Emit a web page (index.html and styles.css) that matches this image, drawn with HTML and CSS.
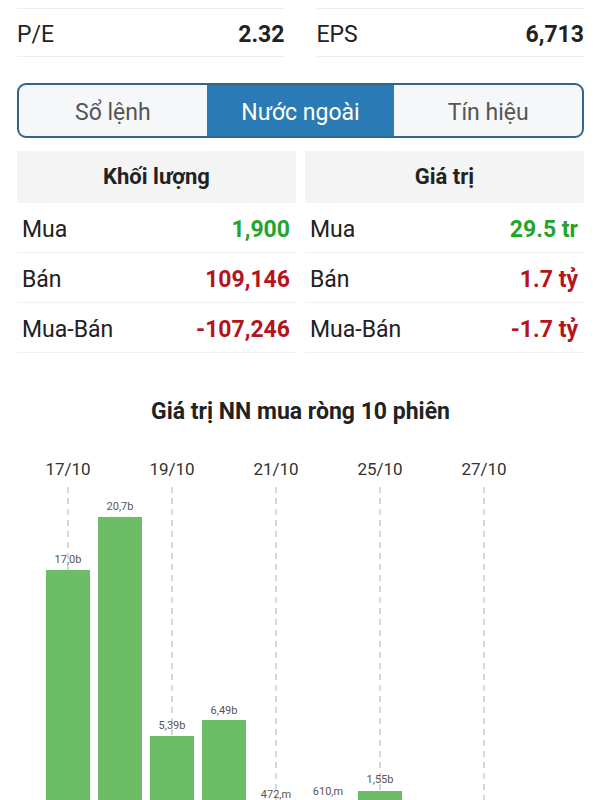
FILE: index.html
```html
<!DOCTYPE html>
<html lang="vi">
<head>
  <meta charset="UTF-8">
  <meta name="viewport" content="width=device-width, initial-scale=1.0">
  <title>Nước ngoài</title>
  <link rel="stylesheet" href="styles.css">
</head>
<body>

  <div class="page">
    <!-- Chỉ số cơ bản -->
    <div class="stats">
      <div class="stat">
        <span class="stat-label">P/E</span>
        <span class="stat-value">2.32</span>
      </div>
      <div class="stat">
        <span class="stat-label">EPS</span>
        <span class="stat-value">6,713</span>
      </div>
    </div>

    <!-- Tabs -->
    <div class="tabs">
      <div class="tab">Sổ lệnh</div>
      <div class="tab active">Nước ngoài</div>
      <div class="tab">Tín hiệu</div>
    </div>

    <!-- Bảng giao dịch nước ngoài -->
    <div class="tables">
      <div class="table">
        <div class="table-head">Khối lượng</div>
        <div class="row"><span>Mua</span><span class="num up">1,900</span></div>
        <div class="row"><span>Bán</span><span class="num down">109,146</span></div>
        <div class="row"><span>Mua-Bán</span><span class="num down">-107,246</span></div>
      </div>
      <div class="table">
        <div class="table-head">Giá trị</div>
        <div class="row"><span>Mua</span><span class="num up">29.5 tr</span></div>
        <div class="row"><span>Bán</span><span class="num down">1.7 tỷ</span></div>
        <div class="row"><span>Mua-Bán</span><span class="num down">-1.7 tỷ</span></div>
      </div>
    </div>

    <h2 class="chart-title">Giá trị NN mua ròng 10 phiên</h2>
  </div>

  <!-- Biểu đồ cột -->
  <div class="chart">
    <svg width="600" height="380" viewBox="0 0 600 380">
      <g class="dates">
        <text x="68" y="35">17/10</text>
        <text x="172" y="35">19/10</text>
        <text x="276" y="35">21/10</text>
        <text x="380" y="35">25/10</text>
        <text x="484" y="35">27/10</text>
      </g>
      <g class="grid">
        <line x1="68" y1="47" x2="68" y2="380"/>
        <line x1="172" y1="47" x2="172" y2="380"/>
        <line x1="276" y1="47" x2="276" y2="380"/>
        <line x1="380" y1="47" x2="380" y2="380"/>
        <line x1="484" y1="47" x2="484" y2="380"/>
      </g>
      <g class="bars">
        <rect x="46" y="130" width="44" height="250"/>
        <rect x="98" y="77" width="44" height="303"/>
        <rect x="150" y="296" width="44" height="84"/>
        <rect x="202" y="280" width="44" height="100"/>
        <rect x="254" y="366" width="44" height="14"/>
        <rect x="306" y="364" width="44" height="16"/>
        <rect x="358" y="351" width="44" height="29"/>
      </g>
      <g class="bar-labels">
        <text x="68" y="123">17,0b</text>
        <text x="120" y="70">20,7b</text>
        <text x="172" y="289">5,39b</text>
        <text x="224" y="274">6,49b</text>
        <text x="276" y="358">472,m</text>
        <text x="328" y="355">610,m</text>
        <text x="380" y="343">1,55b</text>
      </g>
    </svg>
  </div>

</body>
</html>
```

FILE: styles.css
```css
body {
  margin: 0;
  font-family: Roboto, "Noto Sans", sans-serif;
  background-color: #ffffff;
  color: #222222;
}

.page {
  padding: 8px 16px 0 17px;
}

/* Hàng chỉ số P/E, EPS */
.stats {
  display: grid;
  grid-template-columns: 1fr 1fr;
  column-gap: 32px;
}

.stat {
  display: flex;
  justify-content: space-between;
  align-items: center;
  box-sizing: border-box;
  height: 49px;
  padding-top: 3px;
  border-top: 1px solid #eeeeee;
  border-bottom: 1px solid #eeeeee;
  font-size: 23px;
}

.stat-value {
  font-weight: bold;
}

/* Tabs */
.tabs {
  display: flex;
  margin-top: 26px;
  height: 51px;
  border: 2px solid #2f6689;
  border-radius: 9px;
  overflow: hidden;
  background-color: #f6f7f9;
}

.tab {
  flex: 1;
  display: flex;
  align-items: center;
  justify-content: center;
  padding-top: 3px;
  font-size: 23px;
  color: #555555;
}

.tab.active {
  background-color: #2a7bb5;
  color: #ffffff;
}

/* Bảng khối lượng / giá trị */
.tables {
  display: grid;
  grid-template-columns: 1fr 1fr;
  column-gap: 9px;
  margin-top: 13px;
}

.table-head {
  height: 52px;
  line-height: 52px;
  text-align: center;
  background-color: #f4f4f4;
  font-size: 22px;
  font-weight: bold;
}

.row {
  display: flex;
  justify-content: space-between;
  align-items: center;
  box-sizing: border-box;
  height: 50px;
  padding: 4px 6px 0 5px;
  border-bottom: 1px solid #f0f0f0;
  font-size: 23px;
}

.num {
  font-weight: bold;
}

.up {
  color: #23a52c;
}

.down {
  color: #b4141c;
}

.chart-title {
  margin: 46px 0 0;
  text-align: center;
  font-size: 23px;
  line-height: 26px;
  font-weight: bold;
  color: #222222;
}

/* Biểu đồ */
.chart {
  margin-top: 15px;
}

.chart svg {
  display: block;
}

.dates text {
  font-family: Roboto, sans-serif;
  font-size: 17px;
  fill: #333333;
  text-anchor: middle;
}

.grid line {
  stroke: #b0b0b0;
  stroke-width: 1;
  stroke-dasharray: 6 5;
}

.bars rect {
  fill: #6dbd66;
}

.bar-labels text {
  font-family: Roboto, sans-serif;
  font-size: 11px;
  fill: #555555;
  text-anchor: middle;
}
```
